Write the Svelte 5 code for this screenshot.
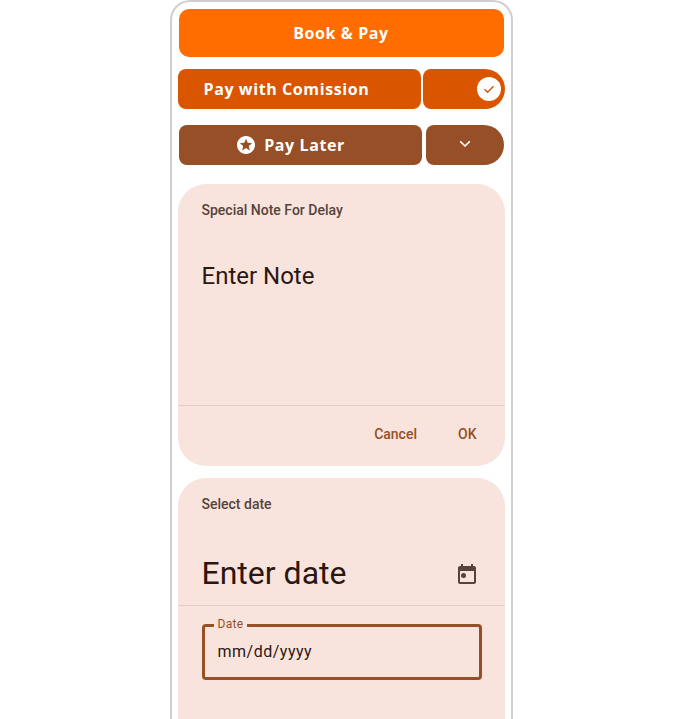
<script>
	let note = 'Enter Note';
	let dateLabel = 'Enter date';
</script>

<div class="phone">
	<button type="button" class="book">Book &amp; Pay</button>

	<div class="row commission">
		<button type="button" class="main">Pay with Comission</button>
		<div class="toggle">
			<span class="knob">
				<svg width="14" height="14" viewBox="0 0 14 14" fill="none">
					<path d="M2.5 7.2L5.6 10.2L11.5 4.2" stroke="#d95500" stroke-width="1.4" />
				</svg>
			</span>
		</div>
	</div>

	<div class="row later">
		<button type="button" class="main">
			<svg width="18" height="18" viewBox="2 2 20 20" fill="#fff">
				<path d="M11.99 2C6.47 2 2 6.48 2 12s4.47 10 9.99 10C17.52 22 22 17.52 22 12S17.52 2 11.99 2zm4.24 16L12 15.45 7.77 18l1.12-4.81-3.73-3.23 4.92-.42L12 5l1.92 4.53 4.92.42-3.73 3.23L16.23 18z" />
			</svg>
			Pay Later
		</button>
		<button type="button" class="more" aria-label="More">
			<svg width="12" height="8" viewBox="0 0 12 8" fill="none">
				<path d="M1.2 1.4L6 6L10.8 1.4" stroke="#fff" stroke-width="1.6" />
			</svg>
		</button>
	</div>

	<section class="card note">
		<p class="label">Special Note For Delay</p>
		<p class="note-text">{note}</p>
		<div class="grow"></div>
		<footer>
			<span>Cancel</span>
			<span>OK</span>
		</footer>
	</section>

	<section class="card date">
		<p class="label">Select date</p>
		<div class="date-head">
			<span class="date-text">{dateLabel}</span>
			<svg class="cal" width="24" height="24" viewBox="0 0 24 24" fill="#55433c">
				<path d="M16 2v2H8V2H6v2H5c-1.1 0-2 .9-2 2v14c0 1.1.9 2 2 2h14c1.1 0 2-.9 2-2V6c0-1.1-.9-2-2-2h-1V2h-2zm3 18H5V9h14v11z" />
				<circle cx="8.5" cy="13.5" r="2.5" />
			</svg>
		</div>
		<div class="field">
			<span class="field-label">Date</span>
			<span class="field-value">mm/dd/yyyy</span>
		</div>
		<footer>
			<span>Cancel</span>
			<span>OK</span>
		</footer>
	</section>
</div>

<style>
	:global(body) {
		background: #fff;
		overflow: hidden;
	}

	p {
		margin: 0;
	}

	button {
		border: none;
		color: #fff;
		font-family: 'Open Sans', sans-serif;
		font-weight: 700;
		font-size: 16px;
		letter-spacing: 0.6px;
		padding: 0;
	}

	.phone {
		box-sizing: border-box;
		width: 343px;
		height: 719px;
		margin: 0 auto;
		padding: 7px 6px 0;
		border: 2px solid #cfcfd3;
		border-bottom: none;
		border-radius: 20px 20px 0 0;
		overflow: hidden;
		font-family: 'Roboto', sans-serif;
	}

	.book {
		display: block;
		width: 325px;
		height: 48px;
		margin-left: 1px;
		background: #ff6d00;
		border-radius: 10px;
	}

	.row {
		display: flex;
		height: 40px;
	}

	.commission {
		gap: 2px;
		margin-top: 12px;
		color: #fff;
	}

	.commission .main {
		width: 243px;
		background: #d95500;
		border-radius: 8px;
		text-align: left;
		padding-left: 26px;
	}

	.toggle {
		display: flex;
		align-items: center;
		justify-content: flex-end;
		width: 82px;
		padding-right: 4px;
		box-sizing: border-box;
		background: #d95500;
		border-radius: 8px 20px 20px 8px;
	}

	.knob {
		display: flex;
		align-items: center;
		justify-content: center;
		width: 24px;
		height: 24px;
		background: #fff;
		border-radius: 50%;
	}

	.later {
		gap: 4px;
		margin: 16px 0 0 1px;
	}

	.later .main {
		display: flex;
		align-items: center;
		justify-content: center;
		gap: 9px;
		width: 243px;
		padding-right: 18px;
		background: #964f27;
		border-radius: 8px;
	}

	.more {
		display: flex;
		align-items: center;
		justify-content: center;
		width: 78px;
		background: #964f27;
		border-radius: 8px 20px 20px 8px;
		padding-bottom: 3px;
	}

	.card {
		display: flex;
		flex-direction: column;
		width: 327px;
		background: #f9e4dd;
		border-radius: 28px;
	}

	.label {
		padding: 18px 24px 0;
		font-size: 14px;
		font-weight: 500;
		line-height: 16px;
		color: #55433c;
	}

	.note {
		height: 282px;
		margin-top: 19px;
	}

	.note-text {
		margin-top: 42px;
		padding: 0 24px;
		font-size: 24px;
		line-height: 32px;
		color: #2b1610;
	}

	.grow {
		flex: 1;
		border-bottom: 1px solid #e3cfc8;
	}

	footer {
		display: flex;
		justify-content: flex-end;
		gap: 41px;
		padding: 0 28px 4px 0;
		height: 60px;
		box-sizing: border-box;
		align-items: center;
		font-size: 14px;
		font-weight: 500;
		color: #964f27;
	}

	.date {
		margin-top: 12px;
		height: 300px;
	}

	.date-head {
		display: flex;
		align-items: center;
		justify-content: space-between;
		margin-top: 30px;
		padding: 0 26px 2px 24px;
		border-bottom: 1px solid #e3cfc8;
		box-sizing: border-box;
		height: 64px;
	}

	.cal {
		margin-top: 2px;
	}

	.date-text {
		font-size: 32px;
		line-height: 40px;
		color: #2b1610;
	}

	.field {
		position: relative;
		box-sizing: border-box;
		display: flex;
		align-items: center;
		width: 280px;
		height: 56px;
		margin: 18px 0 0 24px;
		padding: 0 0 2px 13px;
		border: 3px solid #964f27;
		border-radius: 4px;
	}

	.field-label {
		position: absolute;
		top: -10.5px;
		left: 9px;
		padding: 0 4px;
		background: #f9e4dd;
		font-size: 12px;
		line-height: 14px;
		letter-spacing: 0.3px;
		color: #964f27;
	}

	.field-value {
		font-size: 16px;
		letter-spacing: 0.5px;
		color: #2b1610;
	}

	.date footer {
		margin-top: 19px;
	}
</style>
